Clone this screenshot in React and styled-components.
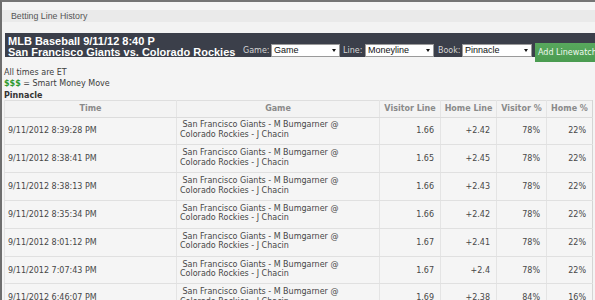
import React from "react";
import styled, { createGlobalStyle } from "styled-components";

const GlobalStyle = createGlobalStyle`
  html, body { margin: 0; padding: 0; background: #f4f4f4; }
  body { font-family: "DejaVu Sans", Verdana, sans-serif; font-size: 8px; color: #3a3a3a; }
`;

const Frame = styled.div`
  width: 595px;
  height: 300px;
  box-sizing: border-box;
  overflow: hidden;
  border-top: 2px solid #767676;
  border-left: 2px solid #6e6e6e;
  background: #f4f4f4;
`;

const TitleBar = styled.div`
  height: 31px;
  box-sizing: border-box;
  padding: 9px 0 0 9px;
  background: linear-gradient(#f6f6f6 0, #f6f6f6 8px, #eaeaea 8px, #eaeaea 20px, #f3f3f3 20px, #f3f3f3 100%);
  font-family: "Liberation Sans", Arial, sans-serif;
  font-size: 8.8px;
  line-height: 11px;
  color: #555;
`;

const HeaderBar = styled.div`
  margin-left: 3px;
  height: 24px;
  background: #3b3f4a;
  display: flex;
  align-items: flex-start;
  white-space: nowrap;
`;

const GameTitle = styled.div`
  width: 238px;
  flex: none;
  box-sizing: border-box;
  padding: 2.5px 0 0 3px;
  font-family: "Liberation Sans", Arial, sans-serif;
  font-weight: bold;
  font-size: 11px;
  line-height: 11px;
  color: #fff;
`;

const Controls = styled.div`
  display: flex;
  align-items: flex-start;
  padding-top: 11px;
  flex: none;
`;

const Label = styled.span`
  color: #d6d6d6;
  font-size: 8px;
  line-height: 13px;
  margin-right: ${(p) => p.$gap}px;
`;

const FakeSelect = styled.div`
  position: relative;
  width: ${(p) => p.$w}px;
  height: 13px;
  box-sizing: border-box;
  background: #fff;
  border: 1px solid #9a9a9a;
  padding-left: 2px;
  margin-right: ${(p) => p.$gap}px;
  font-family: "Liberation Sans", Arial, sans-serif;
  font-size: 9px;
  line-height: 11px;
  color: #111;
  &::after {
    content: "";
    position: absolute;
    right: 3px;
    top: 4px;
    border-left: 2.5px solid transparent;
    border-right: 2.5px solid transparent;
    border-top: 3px solid #111;
  }
`;

const WatchButton = styled.div`
  margin-top: -1px;
  height: 19px;
  width: 90px;
  box-sizing: border-box;
  padding-left: 3px;
  background: linear-gradient(#58a85d, #4a9b50);
  color: #eef7ee;
  font-size: 8px;
  line-height: 19px;
`;

const Info = styled.div`
  margin-top: 9.5px;
  padding-left: 2px;
  line-height: 11.5px;
  color: #3c3c3c;
`;

const Money = styled.span`
  color: #2f9a2f;
  font-weight: bold;
`;

const BookName = styled.div`
  font-weight: bold;
  color: #333;
  margin-bottom: -1px;
`;

const Table = styled.table`
  margin-left: 2px;
  width: 588px;
  table-layout: fixed;
  border-collapse: collapse;
  border-left: 1px solid #c9c9c9;
  border-right: 1px solid #d4d4d4;
  border-top: 1px solid #dedede;
`;

const Th = styled.th`
  height: 15.5px;
  padding: 0;
  font-weight: bold;
  font-size: 8px;
  color: #8a8a8a;
  text-align: center;
  border-left: 1px solid #e4e4e4;
  border-bottom: 1px solid #dcdcdc;
  background: #f3f3f3;
`;

const Row = styled.tr`
  height: 27.83px;
`;

const Td = styled.td`
  padding: ${(p) => (p.$align === "right" ? "0 6px 0 0" : "0 0 0 3px")};
  text-align: ${(p) => p.$align || "left"};
  vertical-align: middle;
  font-size: 8px;
  color: #474747;
  border-left: 1px solid #e4e4e4;
  border-bottom: 1px solid #e0e0e0;
  background: #f5f5f5;
  white-space: nowrap;
  overflow: hidden;
`;

const GameLine = styled.div`
  line-height: 9.5px;
  padding-left: ${(p) => (p.$indent ? 2.5 : 0)}px;
`;

const GameCell = styled(Td)`
  padding-bottom: 2px;
`;

const rows = [
  ["9/11/2012 8:39:28 PM", "1.66", "+2.42", "78%", "22%"],
  ["9/11/2012 8:38:41 PM", "1.65", "+2.45", "78%", "22%"],
  ["9/11/2012 8:38:13 PM", "1.66", "+2.43", "78%", "22%"],
  ["9/11/2012 8:35:34 PM", "1.66", "+2.42", "78%", "22%"],
  ["9/11/2012 8:01:12 PM", "1.67", "+2.41", "78%", "22%"],
  ["9/11/2012 7:07:43 PM", "1.67", "+2.4", "78%", "22%"],
  ["9/11/2012 6:46:07 PM", "1.69", "+2.38", "84%", "16%"],
];

export default function App() {
  return (
    <>
      <GlobalStyle />
      <Frame>
        <TitleBar>Betting Line History</TitleBar>
        <HeaderBar>
          <GameTitle>
            <div>MLB Baseball 9/11/12 8:40 P</div>
            <div>San Francisco Giants vs. Colorado Rockies</div>
          </GameTitle>
          <Controls>
            <Label $gap={1.5}>Game:</Label>
            <FakeSelect $w={69} $gap={3}>Game</FakeSelect>
            <Label $gap={2.5}>Line:</Label>
            <FakeSelect $w={69} $gap={4}>Moneyline</FakeSelect>
            <Label $gap={1.5}>Book:</Label>
            <FakeSelect $w={70} $gap={3}>Pinnacle</FakeSelect>
            <WatchButton>Add Linewatch</WatchButton>
          </Controls>
        </HeaderBar>
        <Info>
          <div>All times are ET</div>
          <div>
            <Money>$$$</Money> = Smart Money Move
          </div>
          <BookName>Pinnacle</BookName>
        </Info>
        <Table>
          <colgroup>
            <col style={{ width: 172 }} />
            <col style={{ width: 203 }} />
            <col style={{ width: 61 }} />
            <col style={{ width: 56 }} />
            <col style={{ width: 50 }} />
            <col style={{ width: 46 }} />
          </colgroup>
          <thead>
            <tr>
              <Th>Time</Th>
              <Th>Game</Th>
              <Th>Visitor Line</Th>
              <Th>Home Line</Th>
              <Th>Visitor %</Th>
              <Th>Home %</Th>
            </tr>
          </thead>
          <tbody>
            {rows.map((r) => (
              <Row key={r[0]}>
                <Td>{r[0]}</Td>
                <GameCell>
                  <GameLine $indent>San Francisco Giants - M Bumgarner @</GameLine>
                  <GameLine>Colorado Rockies - J Chacin</GameLine>
                </GameCell>
                <Td $align="right">{r[1]}</Td>
                <Td $align="right">{r[2]}</Td>
                <Td $align="right">{r[3]}</Td>
                <Td $align="right">{r[4]}</Td>
              </Row>
            ))}
          </tbody>
        </Table>
      </Frame>
    </>
  );
}
